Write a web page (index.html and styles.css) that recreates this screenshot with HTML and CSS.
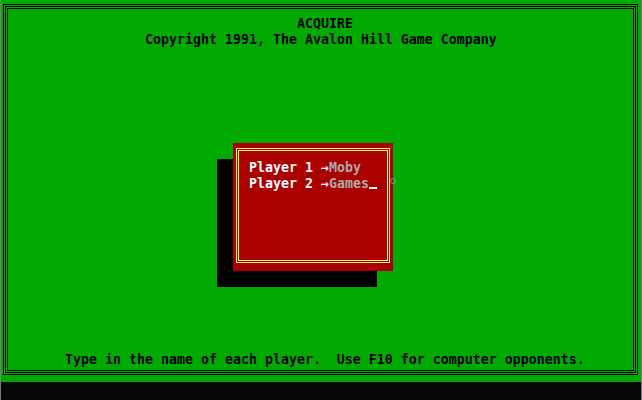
FILE: index.html
```html
<!DOCTYPE html>
<html>
<head>
<meta charset="utf-8">
<link rel="stylesheet" href="styles.css">
</head>
<body>
<div class="screen">
  <div class="play">
    <div class="f1"><div class="f2"><div class="f3">
      <div class="head">
        <div class="line title">ACQUIRE</div>
        <div class="line copy">Copyright 1991, The Avalon Hill Game Company</div>
      </div>
      <div class="line hint">Type in the name of each player.  Use F10 for computer opponents.</div>
    </div></div></div>
  </div>
  <div class="bar"></div>

  <div class="shadow"></div>
  <div class="dialog">
    <div class="yo"><div class="yi">
      <div class="line prow"><span class="lbl">Player 1 </span><span class="arr">→</span><span class="name">Moby</span></div>
      <div class="line prow"><span class="lbl">Player 2 </span><span class="arr">→</span><span class="name">Games</span><span class="cur"></span></div>
    </div></div>
  </div>
  <div class="mouse"></div>
</div>
</body>
</html>
```
FILE: styles.css
```css
html, body {
  margin: 0;
  padding: 0;
  background: #000;
}
.screen {
  position: relative;
  width: 642px;
  height: 400px;
  box-sizing: border-box;
  border-left: 1px solid #7c7c7c;
  border-right: 1px solid #7c7c7c;
  display: flex;
  flex-direction: column;
  overflow: hidden;
}
.play {
  height: 382px;
  box-sizing: border-box;
  background: #00aa00;
  padding: 4px 3px 7px 2px;
  display: flex;
}
.f1, .f2 {
  flex: 1;
  display: flex;
  border: 1px solid #000;
  padding: 1px;
}
.f3 {
  flex: 1;
  border: 1px solid #000;
  display: flex;
  flex-direction: column;
  justify-content: space-between;
  padding: 7px 0 2px 0;
}
.bar {
  flex: 1;
  background: #080808;
}
.line {
  font-family: "DejaVu Sans Mono", monospace;
  font-weight: bold;
  font-size: 13.29px;
  line-height: 16px;
  height: 16px;
  white-space: pre;
  color: #000;
}
.title { padding-left: 289px; }
.copy { padding-left: 137px; }
.hint { padding-left: 57px; }

.shadow {
  position: absolute;
  left: 216px;
  top: 159px;
  width: 160px;
  height: 128px;
  background: #000;
}
.dialog {
  position: absolute;
  left: 232px;
  top: 143px;
  width: 160px;
  height: 128px;
  box-sizing: border-box;
  background: #aa0000;
  padding: 5px 3px 8px 3px;
  display: flex;
}
.yo {
  flex: 1;
  display: flex;
  border: 1px solid #ffff55;
  padding: 1px;
}
.yi {
  flex: 1;
  border: 1px solid #ffff55;
  padding: 9px 0 0 10px;
}
.prow { color: #fff; }
.lbl { color: #fff; }
.arr { color: #fff; }
.name { color: #aaaaaa; }
.cur {
  display: inline-block;
  width: 8px;
  height: 2px;
  background: #fff;
  vertical-align: -1px;
}
.mouse {
  position: absolute;
  left: 389px;
  top: 178px;
  width: 4px;
  height: 4px;
  border: 1px solid #a0a0a0;
  border-radius: 50%;
  opacity: 0.8;
}
```
